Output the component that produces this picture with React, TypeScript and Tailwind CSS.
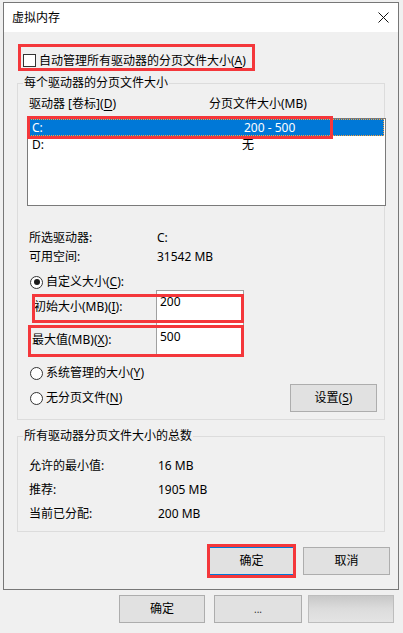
import type { ReactNode } from 'react';

function Key({ children }: { children: ReactNode }) {
  return <span className="underline decoration-1 underline-offset-[2px]">{children}</span>;
}

function Radio({ checked }: { checked?: boolean }) {
  return (
    <span className="flex h-[13px] w-[13px] shrink-0 items-center justify-center rounded-full border border-[#333] bg-white">
      {checked && <span className="h-[6px] w-[6px] rounded-full bg-[#1a1a1a]" />}
    </span>
  );
}

// red highlight drawn over the screenshot
function RedBox({ className }: { className: string }) {
  return <div className={`pointer-events-none absolute border-[3px] border-[#f4373b] ${className}`} />;
}

function Btn({ children, className = '' }: { children?: ReactNode; className?: string }) {
  return (
    <div className={`flex h-[28px] items-center justify-center bg-[#e1e1e1] ${className}`}>
      {children}
    </div>
  );
}

export default function App() {
  return (
    <div className="h-[633px] w-[403px] overflow-hidden bg-[#f0f0f0] font-['Noto_Sans','Noto_Sans_CJK_SC',sans-serif] text-[12px] leading-[16px] text-black">
      <div className="h-[2px]" />

      <div className="ml-[3px] flex h-[588px] w-[396px] flex-col border border-[#777] bg-[#f0f0f0]">
        {/* title bar */}
        <div className="flex h-[29px] shrink-0 items-center justify-between bg-white pl-[8px] pr-[9px]">
          <span>虚拟内存</span>
          <svg width="11" height="11" viewBox="0 0 11 11">
            <path d="M0.5 0.5 L10.5 10.5 M10.5 0.5 L0.5 10.5" stroke="#111" strokeWidth="1" fill="none" />
          </svg>
        </div>

        {/* auto manage */}
        <div className="relative ml-[19px] mt-[22px] flex h-[13px] w-fit items-center gap-[3px]">
          <span className="h-[13px] w-[13px] border border-[#333] bg-white" />
          <span>
            自动管理所有驱动器的分页文件大小(<Key>A</Key>)
          </span>
          <RedBox className="-left-[5px] -right-[9px] -top-[10px] -bottom-[4px]" />
        </div>

        {/* per drive */}
        <div className="relative ml-[13px] mt-[16px] h-[337px] w-[368px] shrink-0 border border-[#dcdcdc]">
          <span className="absolute -top-[9px] left-[5px] bg-[#f0f0f0] px-px">每个驱动器的分页文件大小</span>

          <div className="ml-[11px] mt-[12px] flex h-[16px] items-center">
            <span className="w-[180px]">
              驱动器 [卷标](<Key>D</Key>)
            </span>
            <span>分页文件大小(MB)</span>
          </div>

          <div className="relative ml-[9px] mt-[6px] h-[88px] w-[359px] border border-[#7a7a7a] bg-white px-px">
            <div className="flex h-[17px] items-center border border-dotted border-[#f7a23c] bg-[#0078d7] text-white">
              <span className="ml-[2px] w-[212px]">C:</span>
              <span>200 - 500</span>
            </div>
            <div className="flex h-[17px] items-center">
              <span className="ml-[3px] w-[210px]">D:</span>
              <span>无</span>
            </div>
            <RedBox className="-left-px -top-[3px] h-[23px] w-[306px]" />
          </div>

          <div className="ml-[11px] mt-[22px] flex h-[19px] items-center">
            <span className="w-[128px]">所选驱动器:</span>
            <span>C:</span>
          </div>
          <div className="ml-[11px] flex h-[19px] items-center">
            <span className="w-[128px]">可用空间:</span>
            <span>31542 MB</span>
          </div>

          <div className="ml-[12px] mt-[8px] flex h-[16px] items-center gap-[3px]">
            <Radio checked />
            <span>
              自定义大小(<Key>C</Key>):
            </span>
          </div>

          <div className="relative flex h-[33px]">
            <span className="ml-[16px] mt-[9px] w-[122px]">
              初始大小(MB)(<Key>I</Key>):
            </span>
            <div className="h-[33px] w-[88px] border border-[#a0a0a0] bg-white pl-[3px] pt-[3px]">200</div>
            <RedBox className="left-[14px] top-[4px] h-[29px] w-[212px]" />
          </div>
          <div className="relative flex h-[33px]">
            <span className="ml-[14px] mt-[9px] w-[124px]">
              最大值(MB)(<Key>X</Key>):
            </span>
            <div className="h-[33px] w-[88px] border border-[#a0a0a0] border-t-0 bg-white pl-[3px] pt-[6px]">500</div>
            <RedBox className="left-[10px] top-[2px] h-[32px] w-[216px]" />
          </div>

          <div className="ml-[12px] mt-[9px] flex h-[16px] items-center gap-[3px]">
            <Radio />
            <span>
              系统管理的大小(<Key>Y</Key>)
            </span>
          </div>
          <div className="ml-[12px] mt-[3px] flex h-[28px] w-[347px] items-center justify-between">
            <div className="flex items-center gap-[3px]">
              <Radio />
              <span>
                无分页文件(<Key>N</Key>)
              </span>
            </div>
            <Btn className="w-[87px] border border-[#adadad]">
              <span>
                设置(<Key>S</Key>)
              </span>
            </Btn>
          </div>
        </div>

        {/* totals */}
        <div className="relative ml-[13px] mt-[16px] h-[96px] w-[368px] shrink-0 border border-[#dcdcdc]">
          <span className="absolute -top-[9px] left-[5px] bg-[#f0f0f0] px-px">所有驱动器分页文件大小的总数</span>
          <div className="ml-[11px] mt-[17px] flex h-[24px] items-center">
            <span className="w-[129px]">允许的最小值:</span>
            <span>16 MB</span>
          </div>
          <div className="ml-[11px] flex h-[24px] items-center">
            <span className="w-[129px]">推荐:</span>
            <span>1905 MB</span>
          </div>
          <div className="ml-[11px] flex h-[23px] items-center">
            <span className="w-[129px]">当前已分配:</span>
            <span>200 MB</span>
          </div>
        </div>

        <div className="mt-[15px] flex justify-end gap-[8px] pr-[8px]">
          <div className="relative">
            <Btn className="w-[87px] border border-[#0078d7]">确定</Btn>
            <RedBox className="-left-px -right-px -top-[3px] -bottom-[3px]" />
          </div>
          <Btn className="w-[87px] border border-[#adadad]">取消</Btn>
        </div>
      </div>

      {/* window behind the dialog */}
      <div className="ml-[119px] mt-[5px] flex">
        <Btn className="w-[86px] border border-[#adadad]">确定</Btn>
        <Btn className="ml-[9px] w-[88px] border border-[#adadad] text-[10px] text-[#333]">...</Btn>
        <div className="ml-[6px] h-[28px] w-[86px] border border-[#bdbdbd] bg-linear-to-b from-[#c8c8c8] via-[#dcdcdc] to-[#e4e4e4]" />
      </div>
    </div>
  );
}
